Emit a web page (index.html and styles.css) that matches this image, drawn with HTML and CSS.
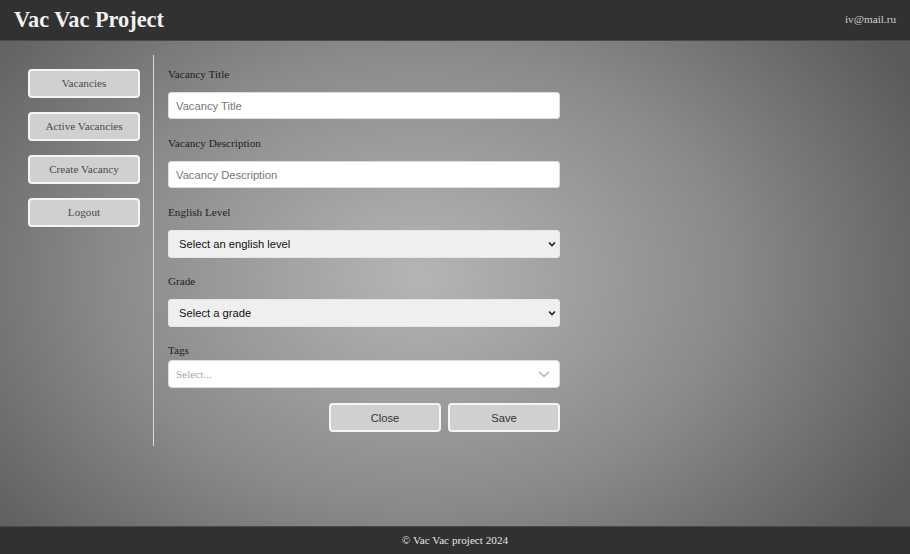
FILE: index.html
```html
<!DOCTYPE html>
<html>
<head>
<meta charset="utf-8">
<link rel="stylesheet" href="styles.css">
</head>
<body>
<div class="page">
  <header class="header">
    <div class="logo">Vac Vac Project</div>
    <div class="user">iv@mail.ru</div>
  </header>
  <main class="main">
    <nav class="sidebar">
      <button class="nav-btn">Vacancies</button>
      <button class="nav-btn">Active Vacancies</button>
      <button class="nav-btn">Create Vacancy</button>
      <button class="nav-btn">Logout</button>
    </nav>
    <section class="content">
      <form class="form">
        <label class="label">Vacancy Title</label>
        <input class="input" type="text" placeholder="Vacancy Title">
        <label class="label">Vacancy Description</label>
        <input class="input" type="text" placeholder="Vacancy Description">
        <label class="label">English Level</label>
        <div class="select"><span>Select an english level</span>
          <svg class="chev" width="8" height="6" viewBox="0 0 8 6"><path d="M1 1.5 L4 4.5 L7 1.5" fill="none" stroke="#222" stroke-width="1.6"/></svg>
        </div>
        <label class="label">Grade</label>
        <div class="select"><span>Select a grade</span>
          <svg class="chev" width="8" height="6" viewBox="0 0 8 6"><path d="M1 1.5 L4 4.5 L7 1.5" fill="none" stroke="#222" stroke-width="1.6"/></svg>
        </div>
        <label class="label label-tags">Tags</label>
        <div class="multi">
          <span class="multi-ph">Select...</span>
          <svg class="multi-chev" width="14" height="10" viewBox="0 0 14 10"><path d="M2 3 L7 7.5 L12 3" fill="none" stroke="#aaa" stroke-width="1.3"/></svg>
        </div>
        <div class="actions">
          <button type="button" class="act-btn">Close</button>
          <button type="button" class="act-btn">Save</button>
        </div>
      </form>
    </section>
  </main>
  <footer class="footer">© Vac Vac project 2024</footer>
</div>
</body>
</html>
```

FILE: styles.css
```css
* { box-sizing: border-box; }
html, body { margin: 0; padding: 0; height: 100%; }
body {
  font-family: "Liberation Serif", "Times New Roman", serif;
  background: radial-gradient(ellipse 62% 75% at 46% 50%, #b5b5b5 0%, #8a8a8a 55%, #5a5a5a 100%);
}
.page { display: flex; flex-direction: column; height: 554px; }
.header {
  height: 41px;
  background: #313131;
  border-bottom: 1px solid #4a4a4a;
  display: flex;
  align-items: center;
  justify-content: space-between;
  padding: 0 14px;
}
.logo { color: #f2f2f2; font-weight: bold; font-size: 22.3px; }
.user { color: #cfcfcf; font-size: 11.2px; margin-top: -2px; }
.main { flex: 1; display: flex; padding-top: 14px; }
.sidebar {
  width: 154px;
  padding: 14px 14px 0 28px;
  display: flex;
  flex-direction: column;
  gap: 14px;
  border-right: 1px solid #d8d8d8;
  height: 391px;
}
.nav-btn {
  width: 112px;
  height: 29px;
  background: #d0d0d0;
  border: 2px solid #f4f4f4;
  border-radius: 4px;
  font-family: "Liberation Serif", serif;
  font-size: 11.2px;
  color: #4a4a4a;
  padding: 0 0 1px;
}
.content { padding: 13px 0 0 14px; }
.form { width: 392px; display: flex; flex-direction: column; }
.label { font-size: 11.2px; color: #1e1e1e; height: 17px; margin-bottom: 7px; }
.input {
  height: 27px;
  border: 1px solid #ddd;
  border-radius: 3px;
  background: #fff;
  padding: 0 7px;
  font-family: "Liberation Sans", Arial, sans-serif;
  font-size: 11.2px;
  margin-bottom: 18px;
}
.input::placeholder { color: #777; }
.select {
  height: 28px;
  background: #efefef;
  border: 1px solid #e6e6e6;
  border-radius: 3px;
  display: flex;
  align-items: center;
  justify-content: space-between;
  padding: 0 3px 0 10px;
  font-family: "Liberation Sans", Arial, sans-serif;
  font-size: 11.2px;
  color: #111;
  margin-bottom: 17px;
}
.label-tags { height: 16px; margin-bottom: 0; }
.multi {
  height: 28px;
  background: #fff;
  border: 1px solid #ddd;
  border-radius: 4px;
  display: flex;
  align-items: center;
  justify-content: space-between;
  padding: 0 8px 0 7px;
}
.multi-ph { font-size: 11.2px; color: #aaa; }
.actions { display: flex; justify-content: flex-end; gap: 7px; margin-top: 15px; }
.act-btn {
  width: 112px;
  height: 29px;
  background: #d0d0d0;
  border: 2px solid #f4f4f4;
  border-radius: 4px;
  font-family: "Liberation Sans", Arial, sans-serif;
  font-size: 11.2px;
  color: #333;
}
.footer {
  height: 28px;
  background: #313131;
  border-top: 1px solid #4a4a4a;
  color: #e4e4e4;
  font-size: 11.2px;
  display: flex;
  align-items: center;
  justify-content: center;
  padding-bottom: 2px;
}
```
